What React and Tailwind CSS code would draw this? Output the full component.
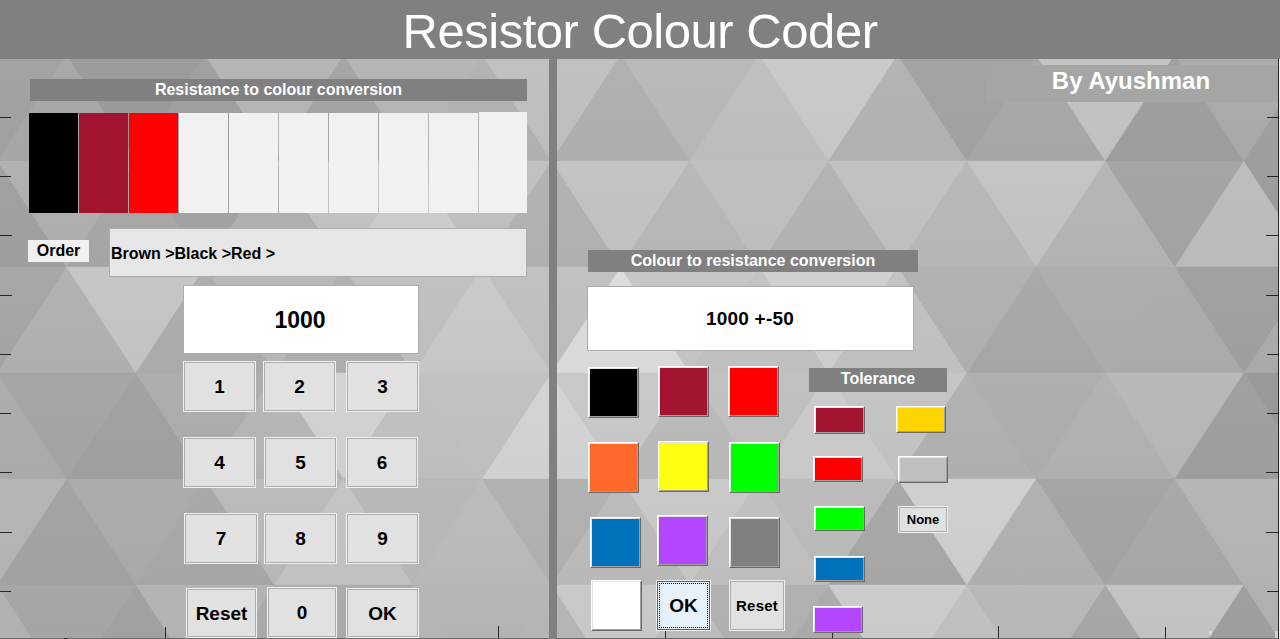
import React from "react";

const COL = 138.5;
const ROW = 106;
const TOP = 55;

// Each row lists grey levels from left to right, alternating the two orientations.
const ROWS = [
  { first: "down", shades: "a2 a8 9b a0 b5 a5 b5 b2 c0 b0 b9 bf c9 b3 a3 a8 c3 9f ab a0" },
  { first: "up", shades: "a0 b0 a7 a2 b0 c2 cd c0 b2 c3 b8 bf b3 c1 b8 c4 b5 a4 bd 9c" },
  { first: "down", shades: "a6 b1 c5 ad b8 b0 c0 c9 c0 dc c6 c2 d0 c2 b1 a8 ad ac a0 ac" },
  { first: "up", shades: "ac a5 a1 ad b6 d2 c0 c1 d3 c8 ba c0 cb c4 b1 ae b2 b8 9f 98" },
  { first: "down", shades: "b5 a3 ab a8 ba c4 b8 bb b1 bb c8 c0 bb a8 cf b1 a4 a8 b5 b5" },
  { first: "up", shades: "b2 a5 a1 b3 aa ab b5 b4 b5 c8 bd b0 aa cb c0 b8 a6 c3 9e b0" },
];

const TRIANGLES = ROWS.flatMap(({ first, shades }, r) => {
  const y0 = TOP + r * ROW;
  const y1 = y0 + ROW;
  return shades.split(" ").map((s, i) => {
    const cx = -2.5 + (i * COL) / 2;
    const l = cx - COL / 2;
    const rt = cx + COL / 2;
    const down = (first === "down") === (i % 2 === 0);
    return {
      key: `${r}-${i}`,
      fill: `#${s}${s}${s}`,
      points: down ? `${l},${y0} ${rt},${y0} ${cx},${y1}` : `${l},${y1} ${rt},${y1} ${cx},${y0}`,
    };
  });
});

const TICKS_Y = [
  [117, 11],
  [176, 11],
  [235, 12],
  [295, 12],
  [354, 11],
  [413, 11],
  [472, 12],
  [532, 12],
  [591, 11],
];
const TICKS_X = [
  [165, 627],
  [498, 626],
  [665, 626],
  [832, 626],
  [998, 626],
  [1165, 627],
];

function Backdrop() {
  return (
    <svg className="absolute inset-0" width="1280" height="639" viewBox="0 0 1280 639" aria-hidden="true">
      <defs>
        <linearGradient id="facet" x1="0" y1="0" x2="0" y2="1">
          <stop offset="0" stopColor="#fff" stopOpacity="0.015" />
          <stop offset="1" stopColor="#000" stopOpacity="0.015" />
        </linearGradient>
      </defs>
      <rect width="1280" height="639" fill="#b4b4b4" />
      {TRIANGLES.map((t) => (
        <g key={t.key}>
          <polygon points={t.points} fill={t.fill} stroke={t.fill} strokeWidth="0.4" />
          <polygon points={t.points} fill="url(#facet)" />
        </g>
      ))}
      <rect x="1209" y="631" width="3" height="4" fill="#d8d8d8" />
      <rect x="1275" y="631" width="3" height="7" fill="#d0d0d0" />
      <g fill="#262626">
        {TICKS_Y.map(([y, w]) => (
          <g key={y}>
            <rect x="0" y={y} width={w} height="1" />
            <rect x={1278 - w} y={y} width={w} height="1" />
          </g>
        ))}
        {TICKS_X.map(([x, y]) => (
          <rect key={x} x={x} y={y} width="1" height={638 - y} />
        ))}
        <rect x="1278" y="59" width="1" height="580" />
      </g>
      <rect x="1279" y="59" width="1" height="580" fill="#f0f0f0" />
      <rect x="0" y="638" width="1278" height="1" fill="#6a6a6a" />
      <rect x="64" y="638" width="3" height="1" fill="#262626" />
    </svg>
  );
}

function Key({ className, children }) {
  return (
    <button className={`flex shrink-0 border border-[#f0f0f0] font-bold text-black ${className}`}>
      <span className="flex h-full w-full items-center justify-center border border-[#adadad] bg-[#e1e1e1] leading-none">
        {children}
      </span>
    </button>
  );
}

function Swatch({ className, color }) {
  return (
    <button
      className={`flex shrink-0 border border-t-white border-r-[#696969] border-b-[#696969] border-l-white ${className}`}
    >
      <span
        className={`h-full w-full border border-t-[#e3e3e3] border-r-[#a0a0a0] border-b-[#a0a0a0] border-l-[#e3e3e3] ${color}`}
      />
    </button>
  );
}

function ResistancePanel() {
  const empty = "bg-[#f1f1f1]";
  const bands = ["bg-black", "bg-[#a2142f]", "bg-[#ff0000]", empty, empty, empty, empty, empty, empty];
  return (
    <section className="flex h-full w-[549px] shrink-0 flex-col">
      <h2 className="mt-5 ml-[30px] h-[22px] w-[497px] bg-[#808080] text-center text-base leading-[22px] font-bold text-white">
        Resistance to colour conversion
      </h2>
      <div className="mt-[11px] ml-[29px] flex h-[101px] items-end gap-px">
        {bands.map((c, i) => (
          <div key={i} className={`h-[100px] w-[49px] ${c}`} />
        ))}
        <div className="h-[101px] w-12 bg-[#f1f1f1]" />
      </div>
      <div className="mt-[15px] ml-7 flex">
        <div className="mt-3 h-[22px] w-[61px] bg-[#f0f0f0] text-center text-base leading-[22px] font-bold">Order</div>
        <div className="ml-5 flex h-[49px] w-[418px] items-center border border-[#abadb3] bg-[#e6e6e6] pt-0.5 pl-px text-base leading-[18px] font-bold">
          Brown &gt;Black &gt;Red &gt;
        </div>
      </div>
      <div className="mt-2 ml-[183px] flex h-[69px] w-[236px] items-center justify-center border border-[#abadb3] bg-white pt-0.5 pr-0.5 text-[23px] font-bold">
        1000
      </div>
      <div className="mt-[7px] ml-[183px] flex text-[19px]">
        <Key className="h-[51px] w-[73px]">1</Key>
        <Key className="ml-[7px] h-[51px] w-[73px]">2</Key>
        <Key className="ml-2.5 h-[51px] w-[73px]">3</Key>
      </div>
      <div className="mt-[25px] ml-[183px] flex text-[19px]">
        <Key className="h-[51px] w-[73px]">4</Key>
        <Key className="ml-2 h-[51px] w-[73px]">5</Key>
        <Key className="ml-[9px] h-[51px] w-[72px]">6</Key>
      </div>
      <div className="mt-[25px] ml-[184px] flex text-[19px]">
        <Key className="h-[51px] w-[74px]">7</Key>
        <Key className="ml-1.5 h-[51px] w-[73px]">8</Key>
        <Key className="ml-[9px] h-[51px] w-[73px]">9</Key>
      </div>
      <div className="mt-[23px] ml-[186px] flex text-[19px]">
        <Key className="mt-px h-[50px] w-[71px]">Reset</Key>
        <Key className="ml-2.5 h-[51px] w-[70px]">0</Key>
        <Key className="mt-px ml-[9px] h-[50px] w-[73px]">OK</Key>
      </div>
    </section>
  );
}

function ColourPad() {
  return (
    <div className="flex w-[198px] flex-col">
      <div className="flex">
        <Swatch className="mt-px h-[51px] w-[51px]" color="bg-black" />
        <Swatch className="ml-[19px] h-[51px] w-[51px]" color="bg-[#a2142f]" />
        <Swatch className="ml-[19px] h-[51px] w-[51px]" color="bg-[#ff0000]" />
      </div>
      <div className="mt-[23px] flex">
        <Swatch className="mt-px h-[51px] w-[51px]" color="bg-[#ff6a2b]" />
        <Swatch className="ml-[19px] h-[51px] w-[51px]" color="bg-[#ffff11]" />
        <Swatch className="mt-px ml-5 h-[51px] w-[51px]" color="bg-[#00ff00]" />
      </div>
      <div className="mt-[22px] ml-0.5 flex">
        <Swatch className="mt-0.5 h-[51px] w-[51px]" color="bg-[#0072bd]" />
        <Swatch className="ml-4 h-[51px] w-[51px]" color="bg-[#b446ff]" />
        <Swatch className="mt-0.5 ml-[21px] h-[51px] w-[51px]" color="bg-[#808080]" />
      </div>
      <div className="mt-3 ml-[3px] flex">
        <Swatch className="h-[51px] w-[51px]" color="bg-white" />
        <button className="ml-3.5 flex h-[51px] w-[55px] shrink-0 border border-[#f0f0f0] text-[19px] font-bold">
          <span className="flex h-full w-full border border-[#0078d7] bg-[#e5f1fb] p-px">
            <span className="flex h-full w-full items-center justify-center border border-dotted border-black leading-none">
              OK
            </span>
          </span>
        </button>
        <Key className="ml-[18px] h-[51px] w-14 text-[15px] tracking-[0.2px]">Reset</Key>
      </div>
    </div>
  );
}

function TolerancePad() {
  return (
    <div className="ml-[23px] flex flex-col">
      <h3 className="mt-0.5 h-6 w-[138px] bg-[#808080] text-center text-base leading-[22px] font-bold text-white">
        Tolerance
      </h3>
      <div className="mt-3.5 ml-1 flex">
        <div className="flex w-[52px] flex-col">
          <Swatch className="ml-px h-7 w-[51px]" color="bg-[#a2142f]" />
          <Swatch className="mt-[22px] h-[26px] w-[50px]" color="bg-[#ff0000]" />
          <Swatch className="mt-6 ml-px h-[25px] w-[51px]" color="bg-[#00ff00]" />
          <Swatch className="mt-[25px] ml-px h-[26px] w-[51px]" color="bg-[#0072bd]" />
          <Swatch className="mt-6 h-[27px] w-[50px]" color="bg-[#b446ff]" />
        </div>
        <div className="ml-[31px] flex flex-col">
          <Swatch className="h-[27px] w-[50px]" color="bg-[#ffd500]" />
          <Swatch className="mt-[23px] ml-0.5 h-[27px] w-[50px]" color="bg-[#c0c0c0]" />
          <Key className="mt-[23px] ml-0.5 h-[27px] w-[50px] text-[13px]">None</Key>
        </div>
      </div>
    </div>
  );
}

function ColourPanel() {
  return (
    <section className="flex h-full flex-1 flex-col">
      <div className="mt-1.5 mr-0.5 h-[37px] w-[292px] self-end bg-[#a5a5a5] pr-0.5 text-center text-[24px] leading-[32px] font-bold text-white">
        By Ayushman
      </div>
      <h2 className="mt-[148px] ml-[31px] h-[22px] w-[330px] bg-[#808080] text-center text-base leading-[22px] font-bold text-white">
        Colour to resistance conversion
      </h2>
      <div className="mt-3.5 ml-[30px] flex h-[65px] w-[327px] items-center justify-center border border-[#abadb3] bg-white pt-0.5 pr-px text-[19px] font-bold tracking-[0.2px]">
        1000 +-50
      </div>
      <div className="mt-[15px] ml-[31px] flex">
        <ColourPad />
        <TolerancePad />
      </div>
    </section>
  );
}

export default function App() {
  return (
    <div className="relative h-[639px] w-[1280px] overflow-hidden font-['Liberation_Sans',Arial,sans-serif] text-black">
      <Backdrop />
      <div className="relative flex h-full flex-col">
        <header className="flex h-[59px] shrink-0 items-center justify-center bg-[#808080] pt-1 text-[49px] leading-none tracking-[-0.46px] text-white">
          <h1>Resistor Colour Coder</h1>
        </header>
        <main className="flex min-h-0 flex-1">
          <ResistancePanel />
          <div className="w-2 shrink-0 bg-[#808080]" />
          <ColourPanel />
        </main>
      </div>
    </div>
  );
}
